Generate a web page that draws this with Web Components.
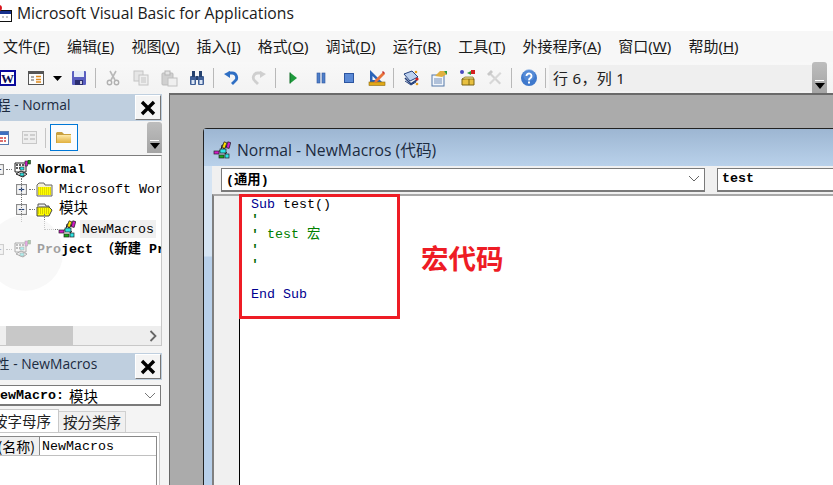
<!DOCTYPE html>
<html lang="zh">
<head>
<meta charset="utf-8">
<title>Microsoft Visual Basic for Applications</title>
<style>
html, body { margin: 0; padding: 0; background: #fff; }
body { font-family: "Noto Sans", "Noto Sans CJK SC", sans-serif; }
</style>
</head>
<body>

<svg width="0" height="0" style="position:absolute">
  <defs>
    <symbol id="ico-module" viewBox="0 0 18 18">
      <path d="M3 12 8 9l5 4M8 9l1-5 5 1-5 4 5 3" fill="none" stroke="#222" stroke-width="1"/>
      <rect x="10" y="1" width="3" height="6" fill="#ffe000" stroke="#222" stroke-width=".7" transform="rotate(20 11 4)"/>
      <rect x="14" y="1" width="3" height="6" fill="#d41bc8" stroke="#222" stroke-width=".7" transform="rotate(15 15 4)"/>
      <rect x="1" y="10" width="5" height="3" fill="#d41bc8" stroke="#222" stroke-width=".7"/>
      <rect x="7" y="8" width="6" height="4" fill="#2fe3e3" stroke="#222" stroke-width=".7"/>
      <rect x="6" y="14" width="5" height="3" fill="#18a818" stroke="#222" stroke-width=".7"/>
      <rect x="12" y="13" width="4" height="4" fill="#2fe3e3" stroke="#222" stroke-width=".7"/>
    </symbol>
    <symbol id="ico-project" viewBox="0 0 18 18">
      <path d="M2 3h11v9H2z" fill="#fff" stroke="#222"/>
      <path d="M3 5h9M3 8h9" stroke="#222" stroke-width="1.4" stroke-dasharray="2 1"/>
      <path d="M3 14l5-3 6 3-4 3z" fill="#f4f4f4" stroke="#222"/>
      <rect x="7" y="7" width="4" height="3" fill="#2fe3e3" stroke="#222" stroke-width=".6"/>
      <rect x="12" y="1" width="2.5" height="5" fill="#d41bc8" stroke="#222" stroke-width=".6"/>
      <rect x="15" y="0" width="2.5" height="4" fill="#18a818" stroke="#222" stroke-width=".6"/>
      <rect x="7" y="13" width="4" height="3" fill="#2fe3e3" stroke="#222" stroke-width=".6"/>
    </symbol>
  </defs>
</svg>

<vba-app>
  <vba-titlebar>Microsoft Visual Basic for Applications</vba-titlebar>

  <vba-menubar>
    <vba-menu-item>文件(<u>F</u>)</vba-menu-item>
    <vba-menu-item>编辑(<u>E</u>)</vba-menu-item>
    <vba-menu-item>视图(<u>V</u>)</vba-menu-item>
    <vba-menu-item>插入(<u>I</u>)</vba-menu-item>
    <vba-menu-item>格式(<u>O</u>)</vba-menu-item>
    <vba-menu-item>调试(<u>D</u>)</vba-menu-item>
    <vba-menu-item>运行(<u>R</u>)</vba-menu-item>
    <vba-menu-item>工具(<u>T</u>)</vba-menu-item>
    <vba-menu-item>外接程序(<u>A</u>)</vba-menu-item>
    <vba-menu-item>窗口(<u>W</u>)</vba-menu-item>
    <vba-menu-item>帮助(<u>H</u>)</vba-menu-item>
  </vba-menubar>

  <vba-toolbar position="行 6，列 1"></vba-toolbar>

  <div style="display:flex;flex:1;min-height:0">
    <vba-sidebar></vba-sidebar>
    <vba-desktop>
      <vba-code-window></vba-code-window>
    </vba-desktop>
  </div>

  <vba-callout></vba-callout>
  <vba-assistive-ball></vba-assistive-ball>
</vba-app>

<script>
class VbaApp extends HTMLElement {
  constructor() {
    super();
    this.attachShadow({mode: "open"});
    this.shadowRoot.innerHTML = `
    <style>
      :host {
        display: flex;
        flex-direction: column;
        position: relative;
        width: 833px;
        height: 485px;
        overflow: hidden;
        background: #fff;
      }
    </style>
    <slot></slot>`;
  }
}

class VbaTitlebar extends HTMLElement {
  constructor() {
    super();
    this.attachShadow({mode: "open"});
    this.shadowRoot.innerHTML = `
    <style>
      :host {
        display: flex;
        align-items: center;
        flex: none;
        box-sizing: border-box;
        height: 31px;
        padding-bottom: 5px;
        background: #fff;
        color: #1a1a1a;
        font: 15.7px "Open Sans", "Noto Sans", sans-serif;
      }
      svg { margin-left: -5px; margin-right: 5px; flex: none; }
    </style>
    <svg width="17" height="18" viewBox="0 0 17 18">
      <rect x="0.5" y="6.5" width="16" height="11" fill="#fff" stroke="#111"/>
      <rect x="1" y="7" width="15" height="3" fill="#16308c"/>
      <circle cx="4" cy="4" r="3" fill="#d8141c"/>
      <path d="M7 13h2M11 13h2" stroke="#888"/>
    </svg>
    <slot></slot>`;
  }
}

class VbaMenubar extends HTMLElement {
  constructor() {
    super();
    this.attachShadow({mode: "open"});
    this.shadowRoot.innerHTML = `
    <style>
      :host {
        display: flex;
        align-items: center;
        flex: none;
        box-sizing: border-box;
        gap: 17.1px;
        height: 31px;
        padding: 0 0 2px 3px;
        background: #f7f7f7;
        color: #1a1a1a;
        font: 15px "Noto Sans", "Noto Sans CJK SC", sans-serif;
      }
    </style>
    <slot></slot>`;
  }
}

class VbaMenuItem extends HTMLElement {
  constructor() {
    super();
    this.attachShadow({mode: "open"});
    this.shadowRoot.innerHTML = `
    <style>
      :host { display: block; white-space: nowrap; }
    </style>
    <slot></slot>`;
  }
}

const TOOL_ICONS = {
  word: `<rect x="-1" y="0" width="17" height="16" fill="#0a0a9c"/><rect x="1" y="2" width="13" height="12" fill="#fff"/><text x="7.5" y="13" text-anchor="middle" font-family="Liberation Serif" font-weight="700" font-size="13" fill="#0a0a50">W</text>`,
  code: `<rect x=".5" y="1.5" width="15" height="13" fill="#fbfbfb" stroke="#555"/><rect x="1" y="2" width="14" height="2" fill="#555"/><path d="M3 7h3M3 10h3" stroke="#555"/><path d="M8 6.5h5M8 9.5h5M8 12h5" stroke="#e08a1c" stroke-width="1.6"/>`,
  arrow: `<path d="M3 6h9l-4.5 5z" fill="#000"/>`,
  save: `<rect x="1" y="1" width="14" height="14" rx="1" fill="#5a5fc0"/><rect x="3" y="1" width="10" height="6" fill="#e6edf8"/><rect x="4" y="10" width="8" height="5" fill="#2a2d70"/><rect x="9" y="11" width="2" height="3" fill="#ccd"/>`,
  cut: `<path d="M5 1l5 9M11 1l-5 9" stroke="#b9b9b9" stroke-width="1.6"/><circle cx="4.5" cy="12.5" r="2.2" fill="none" stroke="#b0b0b0" stroke-width="1.4"/><circle cx="11.5" cy="12.5" r="2.2" fill="none" stroke="#b0b0b0" stroke-width="1.4"/>`,
  copy: `<rect x="1" y="1" width="9" height="10" fill="#e6e6e6" stroke="#c4c4c4"/><rect x="6" y="5" width="9" height="10" fill="#eee" stroke="#c4c4c4"/><path d="M8 8h5M8 10h5M8 12h5" stroke="#c4c4c4"/>`,
  paste: `<rect x="1" y="3" width="11" height="12" rx="1" fill="#d0d0d0" stroke="#bbb"/><rect x="4" y="1" width="5" height="4" fill="#e4e4e4" stroke="#b5b5b5"/><rect x="7" y="8" width="9" height="8" fill="#efefef" stroke="#c0c0c0"/>`,
  find: `<rect x="1" y="6" width="6" height="9" rx="1" fill="#3f5f96"/><rect x="9" y="6" width="6" height="9" rx="1" fill="#3f5f96"/><rect x="3" y="1" width="3" height="6" fill="#26426f"/><rect x="10" y="1" width="3" height="6" fill="#26426f"/><rect x="7" y="6" width="2" height="4" fill="#26426f"/><rect x="2.5" y="10" width="3" height="4" fill="#dce6f4"/><rect x="10.5" y="10" width="3" height="4" fill="#dce6f4"/>`,
  undo: `<path d="M5.5 3H9a4.5 4.5 0 0 1 3 8l-3 3" fill="none" stroke="#2f6fc4" stroke-width="2.8"/><path d="M1 4l6-3v7z" fill="#2f6fc4"/>`,
  redo: `<path d="M10.5 3H7a4.5 4.5 0 0 0-3 8l3 3" fill="none" stroke="#cfcfcf" stroke-width="2.8"/><path d="M15 4L9 1v7z" fill="#cfcfcf"/>`,
  run: `<path d="M5 2.5l7 5.5-7 5.5z" fill="#1e9a3c"/><path d="M5 2.5v11" stroke="#0f6b25"/>`,
  pause: `<rect x="4" y="3" width="3" height="10" fill="#4f7fc8" stroke="#2c55a0" stroke-width=".6"/><rect x="9" y="3" width="3" height="10" fill="#4f7fc8" stroke="#2c55a0" stroke-width=".6"/>`,
  stop: `<rect x="3.5" y="3.5" width="9" height="9" fill="#5b8ad6" stroke="#2c55a0"/>`,
  design: `<path d="M1 0v12h12z" fill="#2a63b8"/><path d="M3.5 6v4h4z" fill="#f7f7f7"/><rect x="0" y="12" width="16" height="3.5" fill="#e0a818" stroke="#8a6a10" stroke-width=".6"/><path d="M6 10l8-8 2 2-8 8-3 1z" fill="#e8743c"/><path d="M13 2l1-1 2 2-1 1z" fill="#c43030"/>`,
  explorer: `<path d="M1 4l8-3 6 6-8 4z" fill="#bcd0ee" stroke="#24407c"/><path d="M2 8l6 6 6-4" fill="none" stroke="#24407c" stroke-width="1.6"/><path d="M2 11l6 4 5-3" fill="none" stroke="#24407c"/><circle cx="13" cy="2" r="1.3" fill="#e8a020"/><circle cx="14" cy="9" r="1.6" fill="#d42020"/><circle cx="14" cy="14" r="1.3" fill="#e8a020"/>`,
  props: `<rect x="1" y="5" width="12" height="11" fill="#f2f6fb" stroke="#5578a8"/><path d="M3 9h8M3 11h8M3 13h8" stroke="#6f8cb8"/><path d="M4 6l5-5h4l3 3-5 3z" fill="#e0b040"/><path d="M13 1l3 0v4z" fill="#2e9a3c"/>`,
  toolbox: `<path d="M3 9l8-1 4 1v6H3z" fill="#e8c040" stroke="#7a6414"/><path d="M3 9l3-2h8l1 2z" fill="#f5e08a" stroke="#7a6414" stroke-width=".7"/><path d="M10 9v6" stroke="#7a6414"/><circle cx="3" cy="2" r="2" fill="#4a4ac0"/><path d="M8 3l4-2v4z" fill="#2e9a3c"/><rect x="12" y="0" width="4" height="4" fill="#d42020"/>`,
  tools: `<path d="M3 2l11 11-1.5 1.5L1.5 3.500z" fill="#d2d2d2"/><path d="M13 2L2 13l1.500 1.500L14.500 3.500z" fill="#d8d8d8"/><path d="M0 4l4-4 2 2-4 4z" fill="#c8c8c8"/>`,
  help: `<circle cx="8" cy="8" r="8" fill="#3e78cc"/><circle cx="8" cy="5" r="6" fill="#6a9be0" opacity=".5"/><path d="M5.500 6a2.500 2.500 0 1 1 4 2c-1 .7-1.500 1-1.500 2.200" fill="none" stroke="#fff" stroke-width="1.900"/><rect x="7" y="11.500" width="2" height="2" fill="#fff"/>`
};

class VbaToolButton extends HTMLElement {
  constructor() {
    super();
    this.attachShadow({mode: "open"});
    const icon = this.getAttribute("icon");
    const narrow = icon === "arrow";
    this.shadowRoot.innerHTML = `
    <style>
      :host {
        display: flex;
        align-items: center;
        justify-content: center;
        flex: none;
        width: ${narrow ? 15 : 28}px;
        height: 100%;
      }
      svg { overflow: visible; }
    </style>
    <svg width="16" height="16" viewBox="0 0 16 16">${TOOL_ICONS[icon]}</svg>`;
  }
}

class VbaToolbar extends HTMLElement {
  constructor() {
    super();
    this.attachShadow({mode: "open"});
    const groups = [
      ["word", "code", "arrow", "save"],
      ["cut", "copy", "paste", "find"],
      ["undo", "redo"],
      ["run", "pause", "stop", "design"],
      ["explorer", "props", "toolbox", "tools"],
      ["help"]
    ];
    const buttons = groups
      .map(g => g.map(i => `<vba-tool-button icon="${i}"></vba-tool-button>`).join(""))
      .join(`<span class="sep"></span>`);
    this.shadowRoot.innerHTML = `
    <style>
      :host {
        display: flex;
        align-items: stretch;
        flex: none;
        height: 31px;
        background: linear-gradient(#f8f8f8, #f3f3f3);
        font: 15px "Noto Sans", "Noto Sans CJK SC", sans-serif;
        color: #222;
      }
      .buttons { display: flex; align-items: center; margin-left: -6px; flex: none; height: 100%; }
      .sep { flex: none; width: 1px; height: 20px; margin: 0 3px 0 2px; background: #b8b8b8; }
      .pos {
        flex: 1;
        display: flex;
        align-items: center;
        margin: 3px 0 2px 0;
        padding: 0 0 2px 4px;
        box-sizing: border-box;
        background: #efefef;
        letter-spacing: .3px;
        white-space: nowrap;
      }
    </style>
    <div class="buttons">${buttons}<span class="sep"></span></div>
    <div class="pos">${this.getAttribute("position")}</div>
    <vba-gripper></vba-gripper>
    <span style="flex:none;width:6px"></span>`;
  }
}

class VbaGripper extends HTMLElement {
  constructor() {
    super();
    this.attachShadow({mode: "open"});
    this.shadowRoot.innerHTML = `
    <style>
      :host {
        display: flex;
        flex-direction: column;
        justify-content: flex-end;
        align-items: center;
        flex: none;
        width: 15px;
        padding-bottom: 4px;
        box-sizing: border-box;
        background: linear-gradient(#bdbdbd, #a4a4a4);
        border-radius: 3px 3px 0 0;
      }
      i { width: 9px; height: 1.500px; background: #fff; margin-bottom: 2px; }
      b { width: 0; height: 0; border: 5px solid transparent; border-top: 6px solid #000; border-bottom: 0; }
    </style>
    <i></i><b></b>`;
  }
}

class VbaCloseButton extends HTMLElement {
  constructor() {
    super();
    this.attachShadow({mode: "open"});
    this.shadowRoot.innerHTML = `
    <style>
      :host {
        display: flex;
        align-items: center;
        justify-content: center;
        flex: none;
        box-sizing: border-box;
        width: 26px;
        height: 25px;
        background: #f4f4f4;
        border: 1px solid;
        border-color: #fff #777 #777 #fff;
      }
    </style>
    <svg width="16" height="16" viewBox="0 0 16 16"><path d="M2 2l12 12M14 2L2 14" stroke="#000" stroke-width="3.400"/></svg>`;
  }
}

class VbaPanelTitle extends HTMLElement {
  constructor() {
    super();
    this.attachShadow({mode: "open"});
    this.shadowRoot.innerHTML = `
    <style>
      :host {
        display: flex;
        align-items: center;
        justify-content: space-between;
        flex: none;
        box-sizing: border-box;
        height: 27px;
        padding-right: 1px;
        background: #bfcfdf;
        color: #1c2b3f;
        font: 13.800px "Open Sans", "Noto Sans", "Noto Sans CJK SC", sans-serif;
        white-space: nowrap;
      }
      .text { margin-bottom: 8px; }
    </style>
    <span class="text"><slot></slot></span>
    <vba-close-button></vba-close-button>`;
  }
}

class VbaTreeRow extends HTMLElement {
  constructor() {
    super();
    this.attachShadow({mode: "open"});
    const box = this.getAttribute("box");
    const indent = this.getAttribute("indent") || 0;
    const icon = this.getAttribute("icon");
    const icons = {
      project: `<svg width="18" height="18"><use href="#ico-project"/></svg>`,
      module: `<svg width="18" height="18"><use href="#ico-module"/></svg>`,
      folder: `<svg width="17" height="15" viewBox="0 0 17 15"><path d="M1 14V3l2-2h5l1 2h7v11z" fill="#f4f0d8" stroke="#666"/><path d="M2 5h13v8H2z" fill="#ffff00"/><path d="M2 6h13M2 8h13M2 10h13M2 12h13" stroke="#c4b400" stroke-dasharray="1 1"/></svg>`,
      open: `<svg width="17" height="15" viewBox="0 0 17 15"><path d="M2 4V2h7l1 2h3v3" fill="#eee" stroke="#555"/><path d="M1 5h12l3 3-3 6H1z" fill="#ffff00" stroke="#444"/><path d="M2 7h11M2 9h11M2 11h11" stroke="#a89800" stroke-dasharray="1 1"/></svg>`
    };
    const symbol = box === "plus"
      ? `<path d="M5 2.500v5"/>`
      : "";
    const boxMarkup = box
      ? `<svg class="box" width="11" height="11" viewBox="0 0 10 10"><rect x=".5" y=".5" width="9" height="9" fill="#f4f4f4" stroke="#8b8b8b"/><g stroke="#20407c"><path d="M2.500 5h5"/>${symbol}</g></svg><span class="dots"></span>`
      : `<span style="width:${this.hasAttribute("link") ? 14 : 0}px" class="link"></span>`;
    this.shadowRoot.innerHTML = `
    <style>
      :host {
        display: flex;
        align-items: center;
        height: 20px;
        margin-left: ${indent}px;
        white-space: nowrap;
        font: 13.330px/16px "Liberation Mono", "Noto Sans CJK SC", monospace;
        color: #000;
      }
      :host([strong]) { font-weight: 700; }
      .box { flex: none; }
      .dots { flex: none; width: 6px; height: 0; margin: 0 1px 0 2px; border-top: 1px dotted #777; }
      .link { flex: none; height: 0; border-top: 1px dotted #777; }
      .ico { flex: none; display: flex; margin-right: 6px; }
      .label { box-sizing: border-box; height: 18px; padding: 2px 2px 0; margin-left: -2px; overflow: visible; }
      :host([selected]) .label { background: #f0f0f0; }
    </style>
    ${boxMarkup}<span class="ico">${icons[icon]}</span><span class="label"><slot></slot></span>`;
    // <use> can't reach a symbol across the shadow boundary, so copy it in
    this.shadowRoot.querySelectorAll("use").forEach(u => {
      const sym = document.querySelector(u.getAttribute("href"));
      const svg = u.parentNode;
      svg.setAttribute("viewBox", sym.getAttribute("viewBox"));
      svg.innerHTML = sym.innerHTML;
    });
  }
}

class VbaSidebar extends HTMLElement {
  constructor() {
    super();
    this.attachShadow({mode: "open"});
    this.shadowRoot.innerHTML = `
    <style>
      :host {
        display: flex;
        flex-direction: column;
        flex: none;
        box-sizing: border-box;
        width: 170px;
        padding: 1px 7px 0 0;
        background: #f4f4f4;
        border-right: 1px solid #666;
      }
      .tools { display: flex; align-items: stretch; flex: none; height: 31px; position: relative; margin-top: 1px; }
      .tools .left { display: flex; align-items: center; flex: 1; }
      .tools .sep { width: 1px; height: 20px; background: #c4c4c4; margin: 0 4px 0 8px; }
      .folder { display: flex; align-items: center; justify-content: center; box-sizing: border-box;
        width: 28px; height: 27px; border: 1px solid #0078d7; background: #fafcff; }
      .tree {
        position: relative;
        box-sizing: border-box;
        flex: none;
        height: 191px;
        margin-top: 2px;
        padding-top: 2px;
        background: #fff;
        border: 1px solid #c8c8c8;
        border-left: 0;
        border-top-color: #7d7d7d;
        display: flex;
        flex-direction: column;
      }
      .rows { flex: 1; margin-top: 1px; overflow: hidden; }
      .vline { position: absolute; border-left: 1px dotted #777; width: 0; }
      .hscroll { display: flex; align-items: center; flex: none; height: 19px; background: #eee; }
      .thumb { width: 67px; height: 100%; margin-left: 6px; background: #c8c8c8; }
      .hscroll svg { margin-left: auto; margin-right: 4px; }
      .gap { flex: none; height: 7px; }
      .dd {
        display: flex;
        align-items: center;
        flex: none;
        box-sizing: border-box;
        height: 21px;
        margin: 5px 1px 0 0;
        background: #fff;
        border: 1px solid #7a7a7a;
        border-width: 1px 1px 2px 0;
        font: 700 13.330px "Liberation Mono", monospace;
        white-space: nowrap;
        overflow: hidden;
      }
      .dd span { margin-left: -8px; }
      .dd em { font: 400 14.500px "Noto Sans CJK SC", sans-serif; margin-left: 5px; }
      .dd svg { margin-left: auto; margin-right: 4px; flex: none; }
      .tabs { display: flex; align-items: flex-end; flex: none; height: 24px; margin-top: 2px;
        font: 14.500px "Noto Sans CJK SC", sans-serif; color: #222; white-space: nowrap; }
      .tab { box-sizing: border-box; display: flex; align-items: center; padding-bottom: 2px; }
      .tab.on { width: 59px; height: 23px; background: #fff; border: 1px solid #c8c8c8; border-width: 1px 1px 0 0; overflow: hidden; justify-content: flex-end; padding-right: 7px; }
      .tab.off { width: 67px; height: 21px; background: #f0f0f0; border: 1px solid #d0d0d0; border-bottom: 0; border-left: 0; justify-content: center; }
      .grid { flex: 1; min-height: 0; box-sizing: border-box; margin-right: 2px; padding: 3px 2px 0 0; background: #fff; border: 1px solid #c8c8c8; border-left: 0; border-bottom: 0; }
      .gridbox { height: 100%; border: 1px solid #888; border-left: 0; border-bottom: 0; background: #fff; }
      .gridrow { display: flex; height: 18px; border-bottom: 1px solid #c0c0c0; }
      .gridrow .k { box-sizing: border-box; width: 40px; flex: none; background: #f0f0f0; border-right: 1px solid #888;
        font: 14px "Noto Sans CJK SC", sans-serif; display: flex; align-items: center; justify-content: flex-end; padding-right: 4px; overflow: hidden; white-space: nowrap; }
      .gridrow .v { padding: 1px 0 0 2px; font: 13.330px/18px "Liberation Mono", monospace; }
      .cjk { display: inline-block; margin-top: -3px; font: 14.500px/16px "Noto Sans CJK SC", sans-serif; }
    </style>

    <vba-panel-title><span style="margin-left:-17px">工程 - Normal</span></vba-panel-title>
    <div class="tools">
      <div class="left">
        <svg style="margin-left:-7px;flex:none" width="16" height="14" viewBox="0 0 16 14"><rect x=".5" y=".5" width="15" height="13" fill="#fff" stroke="#5a7cb0"/><rect x="1" y="1" width="14" height="3" fill="#3e6fc0"/><path d="M3 7h10M3 10h10" stroke="#d04040" stroke-width="1.400" stroke-dasharray="3 1"/></svg>
        <svg style="margin-left:13px;flex:none" width="15" height="13" viewBox="0 0 15 13"><rect x=".5" y=".5" width="14" height="12" fill="#eee" stroke="#c8c8c8"/><path d="M2 4h4M2 8h4M8 4h5M8 8h5" stroke="#c4c4c4" stroke-width="1.500"/></svg>
        <span class="sep"></span>
        <span class="folder"><svg width="16" height="13" viewBox="0 0 16 13"><path d="M0 12V2l1-1h5l2 2h7v9z" fill="#c9a040"/><path d="M1 4h14v8H1z" fill="url(#fg)"/><defs><linearGradient id="fg" x1="0" y1="0" x2="0" y2="1"><stop offset="0" stop-color="#ffe9a8"/><stop offset="1" stop-color="#e0b040"/></linearGradient></defs></svg></span>
      </div>
      <vba-gripper></vba-gripper>
    </div>

    <div class="tree">
      <span class="vline" style="left:21px;top:22px;height:44px"></span>
      <span class="vline" style="left:44px;top:58px;height:14px"></span>
      <div class="rows">
        <vba-tree-row box="minus" indent="-7" icon="project" strong>Normal</vba-tree-row>
        <vba-tree-row box="plus" indent="16" icon="folder">Microsoft Wor</vba-tree-row>
        <vba-tree-row box="minus" indent="16" icon="open"><span class="cjk">模块</span></vba-tree-row>
        <vba-tree-row link indent="44" icon="module" selected>NewMacros</vba-tree-row>
        <vba-tree-row box="minus" indent="-7" icon="project" strong>Project （新建 Project）</vba-tree-row>
      </div>
      <div class="hscroll">
        <span class="thumb"></span>
        <svg width="8" height="12" viewBox="0 0 8 12"><path d="M1.500 1l5 5-5 5" fill="none" stroke="#666" stroke-width="1.800"/></svg>
      </div>
    </div>

    <div class="gap"></div>
    <vba-panel-title><span style="margin-left:-18px">属性 - NewMacros</span></vba-panel-title>
    <div class="dd">
      <span>NewMacro:</span><em>模块</em>
      <svg width="12" height="7" viewBox="0 0 12 7"><path d="M1 1l5 5 5-5" fill="none" stroke="#777"/></svg>
    </div>
    <div class="tabs">
      <div class="tab on">按字母序</div>
      <div class="tab off">按分类序</div>
    </div>
    <div class="grid">
      <div class="gridbox">
        <div class="gridrow"><div class="k">(名称)</div><div class="v">NewMacros</div></div>
      </div>
    </div>`;
  }
}

class VbaDesktop extends HTMLElement {
  constructor() {
    super();
    this.attachShadow({mode: "open"});
    this.shadowRoot.innerHTML = `
    <style>
      :host {
        display: flex;
        flex: 1;
        min-width: 0;
        box-sizing: border-box;
        padding: 33px 0 0 33px;
        background: #ababab;
        border-top: 2px solid #6a6a6a;
        overflow: hidden;
      }
    </style>
    <slot></slot>`;
  }
}

class VbaCombo extends HTMLElement {
  constructor() {
    super();
    this.attachShadow({mode: "open"});
    this.shadowRoot.innerHTML = `
    <style>
      :host {
        display: flex;
        align-items: center;
        flex: none;
        box-sizing: border-box;
        height: 24px;
        padding: 0 0 2px 4px;
        background: #fff;
        border: 1px solid #7a7a7a;
        border-bottom-width: 2px;
        font: 700 13.330px "Liberation Mono", "Noto Sans CJK SC", monospace;
        color: #000;
        white-space: nowrap;
      }
      svg { margin-left: auto; margin-right: 4px; }
    </style>
    <slot></slot>
    ${this.hasAttribute("arrow") ? `<svg width="12" height="7" viewBox="0 0 12 7"><path d="M1 1l5 5 5-5" fill="none" stroke="#666"/></svg>` : ""}`;
  }
}

class VbaCodeWindow extends HTMLElement {
  constructor() {
    super();
    this.attachShadow({mode: "open"});
    this.shadowRoot.innerHTML = `
    <style>
      :host {
        display: flex;
        flex-direction: column;
        flex: none;
        box-sizing: border-box;
        width: 640px;
        height: 358px;
        background: #b8d0ea;
        border: 1px solid #222;
        border-radius: 4px 0 0 0;
        border-width: 1px 0 0 1px;
      }
      .title {
        display: flex;
        align-items: center;
        flex: none;
        height: 37px;
        padding: 4px 0 0 9px;
        box-sizing: border-box;
        background: linear-gradient(#9db6d2, #b9d1ea);
        color: #1c2b3f;
        font: 15.700px "Open Sans", "Noto Sans", "Noto Sans CJK SC", sans-serif;
        white-space: nowrap;
      }
      .title svg { margin-right: 6px; flex: none; }
      .body { flex: 1; display: flex; flex-direction: column; padding-left: 8px; min-height: 0; background: linear-gradient(#d5e4f3 0, #d5e4f3 90px, #b8d0ea 91px); }
      .combos { display: flex; flex: none; gap: 12px; height: 28px; padding: 2px 0 0 9px; box-sizing: border-box; background: #f0f0f0; }
      .combos vba-combo:first-child { width: 484px; }
      .combos vba-combo:last-child { width: 200px; }
      .pane { flex: 1; display: flex; min-height: 0; border-left: 2px solid #808080; border-top: 2px solid #a8a8a8; background: #fff; }
      .margin { flex: none; width: 25px; background: #f0f0f0; border-right: 1px solid #000; }
      .code { padding: 1px 0 0 11px; margin: 0; font: 13.330px/15px "Liberation Mono", "Noto Sans CJK SC", monospace; color: #000; white-space: pre; }
      .kw { color: #000090; }
      .cm { color: #008000; }
      .ap { color: #006800; font-weight: 700; }
    </style>
    <div class="title">
      <svg width="18" height="18" viewBox="0 0 18 18">${document.querySelector("#ico-module").innerHTML}</svg>
      Normal - NewMacros (代码)
    </div>
    <div class="body">
      <div class="combos">
        <vba-combo arrow>(通用)</vba-combo>
        <vba-combo>test</vba-combo>
      </div>
      <div class="pane">
        <div class="margin"></div>
<pre class="code"><span class="kw">Sub</span> test()
<span class="ap">'</span>
<span class="cm"><span class="ap">'</span> test 宏</span>
<span class="ap">'</span>
<span class="ap">'</span>

<span class="kw">End Sub</span></pre>
      </div>
    </div>`;
  }
}

class VbaCallout extends HTMLElement {
  constructor() {
    super();
    this.attachShadow({mode: "open"});
    this.shadowRoot.innerHTML = `
    <style>
      :host { display: block; position: absolute; left: 239px; top: 194px; width: 161px; height: 125px; box-sizing: border-box; border: 3px solid #ee1c25; }
      span { position: absolute; left: 179px; top: 42px; color: #ee1c25; white-space: nowrap;
        font: 700 27.500px/36px "Noto Sans CJK SC", sans-serif; }
    </style>
    <span>宏代码</span>`;
  }
}

class VbaAssistiveBall extends HTMLElement {
  constructor() {
    super();
    this.attachShadow({mode: "open"});
    this.shadowRoot.innerHTML = `
    <style>
      :host { display: block; position: absolute; left: -13px; top: 215px; width: 76px; height: 76px; border-radius: 50%; background: rgba(245,245,245,.65); }
    </style>`;
  }
}

customElements.define("vba-app", VbaApp);
customElements.define("vba-titlebar", VbaTitlebar);
customElements.define("vba-menubar", VbaMenubar);
customElements.define("vba-menu-item", VbaMenuItem);
customElements.define("vba-tool-button", VbaToolButton);
customElements.define("vba-gripper", VbaGripper);
customElements.define("vba-toolbar", VbaToolbar);
customElements.define("vba-close-button", VbaCloseButton);
customElements.define("vba-panel-title", VbaPanelTitle);
customElements.define("vba-tree-row", VbaTreeRow);
customElements.define("vba-sidebar", VbaSidebar);
customElements.define("vba-desktop", VbaDesktop);
customElements.define("vba-combo", VbaCombo);
customElements.define("vba-code-window", VbaCodeWindow);
customElements.define("vba-callout", VbaCallout);
customElements.define("vba-assistive-ball", VbaAssistiveBall);
</script>
</body>
</html>
